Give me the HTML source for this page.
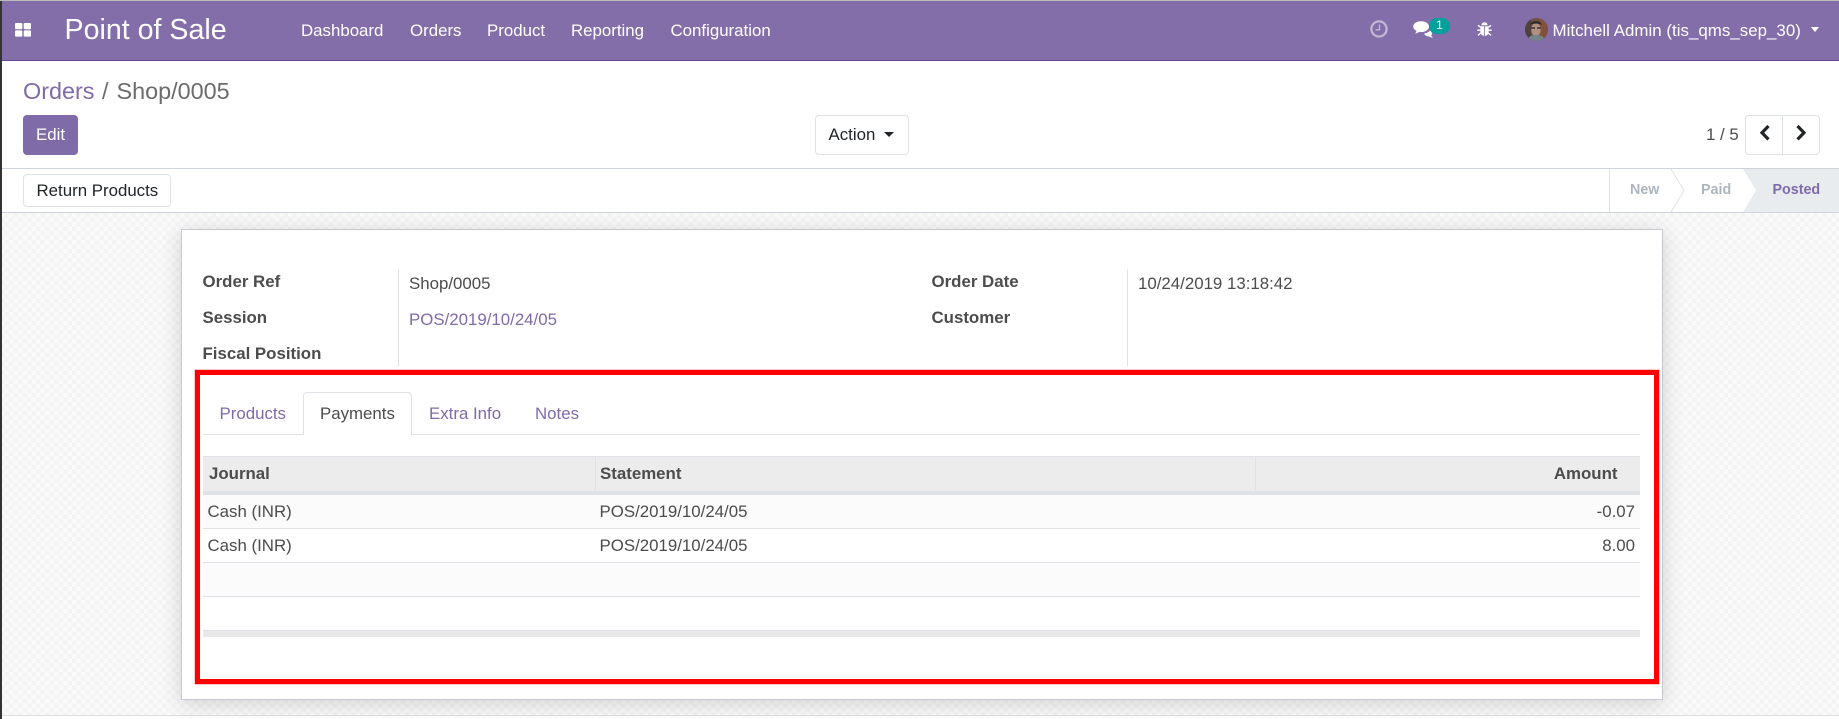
<!DOCTYPE html>
<html lang="en"><head><meta charset="utf-8"><title>Point of Sale</title>
<style>
html,body{margin:0;padding:0;width:1839px;height:719px;overflow:hidden;background:#fff}
body{position:relative;font-family:"Liberation Sans",sans-serif;font-size:16.85px;color:#4c4c4c}
.a{position:absolute;box-sizing:border-box}
.t{position:absolute;white-space:nowrap;line-height:20px;height:20px}
.b{font-weight:700}
.p{color:#7f6ba8}
.n{color:#fff;top:21px}
.btn{position:absolute;box-sizing:border-box;background:#fff;border:1px solid #dee2e6;border-radius:4px}
</style></head><body>
<div class="a" style="left:0;top:0;width:1839px;height:1px;background:#bdbdbd"></div>
<div class="a" style="left:0;top:1px;width:1839px;height:60px;background:#836eaa;border-bottom:1px solid #634d93"></div>

<!-- apps icon -->
<svg class="a" style="left:15px;top:23px" width="16" height="14" viewBox="0 0 16 14"><g fill="#fff"><rect x="0" y="0" width="7.300" height="6.200" rx="1"/><rect x="8.700" y="0" width="7.300" height="6.200" rx="1"/><rect x="0" y="7.400" width="7.300" height="6.200" rx="1"/><rect x="8.700" y="7.400" width="7.300" height="6.200" rx="1"/></g></svg>
<div class="t" style="left:64.500px;top:20px;font-size:28.600px;color:#fff">Point of Sale</div>
<div class="t n" style="left:301px">Dashboard</div>
<div class="t n" style="left:410px">Orders</div>
<div class="t n" style="left:487px">Product</div>
<div class="t n" style="left:571px">Reporting</div>
<div class="t n" style="left:670.500px">Configuration</div>

<!-- clock -->
<svg class="a" style="left:1369px;top:20px;opacity:.5" width="20" height="18" viewBox="0 0 20 18"><circle cx="10" cy="9" r="7.600" fill="none" stroke="#fff" stroke-width="2.300"/><path d="M10.500 4.500V9.800H6.500" fill="none" stroke="#fff" stroke-width="1.400"/></svg>
<!-- comments -->
<svg class="a" style="left:1413px;top:21px" width="22" height="18" viewBox="0 0 22 18"><path d="M16 5.500c0 3-3.400 5.600-7.800 5.600-.8 0-1.500-.1-2.200-.2-1 .9-2.400 1.500-4 1.700.8-.8 1.400-1.700 1.500-2.800C1.400 8.800.2 7.300.2 5.500.2 2.500 3.700.2 8.100.2S16 2.500 16 5.500z" fill="#fff"/><path d="M11 12.500c2.500-.3 4.900-1.300 6-3 .7.800 2 2 2 3.300 0 .7-.4 1.300-.8 1.700.2.800.9 1.500 2 2.300-1.500-.1-3-.5-4-1.300-2.200.1-4.200-1-5.200-3z" fill="#fff"/></svg>
<div class="a" style="left:1429px;top:18px;width:21px;height:16px;border-radius:8px;background:#00a09d;color:#fff;font-size:12px;line-height:15px;text-align:center">1</div>
<!-- bug -->
<svg class="a" style="left:1477px;top:22px" width="15" height="15" viewBox="0 0 15 15"><g fill="#fff"><path d="M4.400 3.300a3.100 3.100 0 0 1 6.200 0z"/><path d="M3.400 4.300h3.700V14C4.900 13.800 3.400 12 3.400 9.800zM7.900 4.300h3.700v5.500c0 2.200-1.500 4-3.700 4.200z"/></g><path d="M3.500 5.200 1 3.300M11.500 5.200 14 3.300M3.500 8.200H.3M11.500 8.200h3.200M3.800 11 1 13.400M11.200 11l2.800 2.400" stroke="#fff" stroke-width="1.400" fill="none"/></svg>
<!-- avatar -->
<svg class="a" style="left:1525px;top:18px" width="23" height="23" viewBox="0 0 23 23"><defs><clipPath id="c"><circle cx="11.500" cy="11.500" r="11.500"/></clipPath></defs><g clip-path="url(#c)"><rect width="23" height="23" fill="#6f5144"/><rect x="15" y="0" width="8" height="23" fill="#84513c"/><rect x="0" y="0" width="6" height="23" fill="#4f413d"/><ellipse cx="11" cy="11.500" rx="4.800" ry="6.500" fill="#b09181"/><path d="M5 7C6 2 16 2 17 7c-3-2-9-2-12 0z" fill="#2d2624"/><path d="M6 10h4M12 10h4" stroke="#3a3230" stroke-width="1.500"/><path d="M3 23c0-5 4-6 8-6s8 1 9 6z" fill="#76858c"/></g></svg>
<div class="t n" style="left:1552.500px;letter-spacing:.04px">Mitchell Admin (tis_qms_sep_30)</div>
<div class="a" style="left:1811px;top:27px;width:0;height:0;border-left:4.500px solid transparent;border-right:4.500px solid transparent;border-top:5px solid #fff"></div>

<!-- control panel -->
<div class="t p" style="left:23px;top:81px;font-size:23.400px">Orders</div>
<div class="t" style="left:102px;top:81px;font-size:23.400px;color:#6c6c6c">/</div>
<div class="t" style="left:116.500px;top:81px;font-size:23.400px;color:#6c6c6c">Shop/0005</div>
<div class="a" style="left:23px;top:115px;width:55px;height:40px;background:#7f6ba8;border-radius:4px;color:#fff;text-align:center;line-height:39px">Edit</div>
<div class="btn" style="left:815px;top:115px;width:94px;height:40px;color:#212529;line-height:38px;padding-left:12.500px">Action</div>
<div class="a" style="left:884px;top:132px;width:0;height:0;border-left:5px solid transparent;border-right:5px solid transparent;border-top:5px solid #212529"></div>
<div class="t" style="left:1706px;top:125px">1 / 5</div>
<div class="btn" style="left:1745px;top:115px;width:75px;height:40px"></div>
<div class="a" style="left:1782px;top:116px;width:1px;height:38px;background:#dee2e6"></div>
<svg class="a" style="left:1758px;top:124px" width="14" height="18" viewBox="0 0 14 18"><path d="M10.500 2 4 8.700l6.500 6.700" fill="none" stroke="#212529" stroke-width="3.200"/></svg>
<svg class="a" style="left:1794px;top:124px" width="14" height="18" viewBox="0 0 14 18"><path d="M3.500 2 10 8.700l-6.500 6.700" fill="none" stroke="#212529" stroke-width="3.200"/></svg>

<!-- status bar -->
<div class="a" style="left:0;top:168px;width:1839px;height:1px;background:#ced4da"></div>
<div class="a" style="left:0;top:212px;width:1839px;height:1px;background:#ced4da"></div>
<div class="btn" style="left:23px;top:174px;width:148px;height:33px;color:#212529;line-height:31px;padding-left:12.500px">Return Products</div>
<svg class="a" style="left:1609px;top:169px" width="230" height="43" viewBox="0 0 230 43"><path d="M134 0H230V43H134L147 21.500z" fill="#e9ecef"/><path d="M.5 0V43M62 0 75 21.500 62 43" fill="none" stroke="#dee2e6"/></svg>
<div class="t b" style="left:1630px;top:180px;font-size:14.300px;color:#adb5bd">New</div>
<div class="t b" style="left:1701px;top:180px;font-size:14.300px;color:#adb5bd">Paid</div>
<div class="t b p" style="left:1772.500px;top:180px;font-size:14.300px">Posted</div>

<!-- background -->
<div class="a" style="left:0;top:213px;width:1839px;height:502px;background-color:#f8f8f8;background-image:repeating-conic-gradient(#f4f4f4 0 25%,#fafafa 0 50%);background-size:9px 9px"></div>
<div class="a" style="left:0;top:715px;width:1839px;height:1px;background:#ddd"></div>
<div class="a" style="left:0;top:1px;width:2px;height:718px;background:#333"></div>

<!-- sheet -->
<div class="a" style="left:181px;top:229px;width:1482px;height:471px;background:#fff;border:1px solid #c8c8d4;box-shadow:0 4px 20px rgba(0,0,0,.16)"></div>

<div class="t b" style="left:202.500px;top:272px">Order Ref</div>
<div class="t b" style="left:202.500px;top:308px">Session</div>
<div class="t b" style="left:202.500px;top:344px">Fiscal Position</div>
<div class="a" style="left:398px;top:269px;width:1px;height:97px;background:#dee2e6"></div>
<div class="t" style="left:409px;top:274px">Shop/0005</div>
<div class="t p" style="left:409px;top:310px">POS/2019/10/24/05</div>
<div class="t b" style="left:931.500px;top:272px">Order Date</div>
<div class="t b" style="left:931.500px;top:308px">Customer</div>
<div class="a" style="left:1127px;top:269px;width:1px;height:97px;background:#dee2e6"></div>
<div class="t" style="left:1138px;top:274px">10/24/2019 13:18:42</div>

<!-- tabs -->
<div class="a" style="left:203px;top:434px;width:1437px;height:1px;background:#dee2e6"></div>
<div class="a" style="left:303px;top:392px;width:109px;height:43px;background:#fff;border:1px solid #dee2e6;border-bottom:0;border-radius:4px 4px 0 0"></div>
<div class="t p" style="left:219.500px;top:404px">Products</div>
<div class="t" style="left:320px;top:404px">Payments</div>
<div class="t p" style="left:429px;top:404px">Extra Info</div>
<div class="t p" style="left:535px;top:404px">Notes</div>

<!-- table -->
<div class="a" style="left:203px;top:456px;width:1437px;height:35px;background:#ececec;border-top:1px solid #dee2e6"></div>
<div class="a" style="left:203px;top:491px;width:1437px;height:4px;background:#dee2e6"></div>
<div class="a" style="left:595px;top:457px;width:1px;height:34px;background:#dee2e6"></div>
<div class="a" style="left:1255px;top:457px;width:1px;height:34px;background:#dee2e6"></div>
<div class="a" style="left:203px;top:495px;width:1437px;height:33px;background:#fbfbfb"></div>
<div class="a" style="left:203px;top:528px;width:1437px;height:1px;background:#dee2e6"></div>
<div class="a" style="left:203px;top:562px;width:1437px;height:1px;background:#dee2e6"></div>
<div class="a" style="left:203px;top:563px;width:1437px;height:33px;background:#fbfbfb"></div>
<div class="a" style="left:203px;top:596px;width:1437px;height:1px;background:#dee2e6"></div>
<div class="a" style="left:203px;top:630px;width:1437px;height:7px;background:#e9e9e9;border-top:1px solid #dee2e6"></div>
<div class="t b" style="left:209px;top:464px">Journal</div>
<div class="t b" style="left:600px;top:464px">Statement</div>
<div class="t b" style="right:221.500px;top:464px">Amount</div>
<div class="t" style="left:207.500px;top:502px">Cash (INR)</div>
<div class="t" style="left:599.500px;top:502px">POS/2019/10/24/05</div>
<div class="t" style="right:204px;top:502px">-0.07</div>
<div class="t" style="left:207.500px;top:536px">Cash (INR)</div>
<div class="t" style="left:599.500px;top:536px">POS/2019/10/24/05</div>
<div class="t" style="right:204px;top:536px">8.00</div>

<!-- red box -->
<div class="a" style="left:194.500px;top:369.500px;width:1464px;height:314.500px;border:5px solid #f00;box-shadow:0 0 0 .5px #ff8f8f"></div>
</body></html>
